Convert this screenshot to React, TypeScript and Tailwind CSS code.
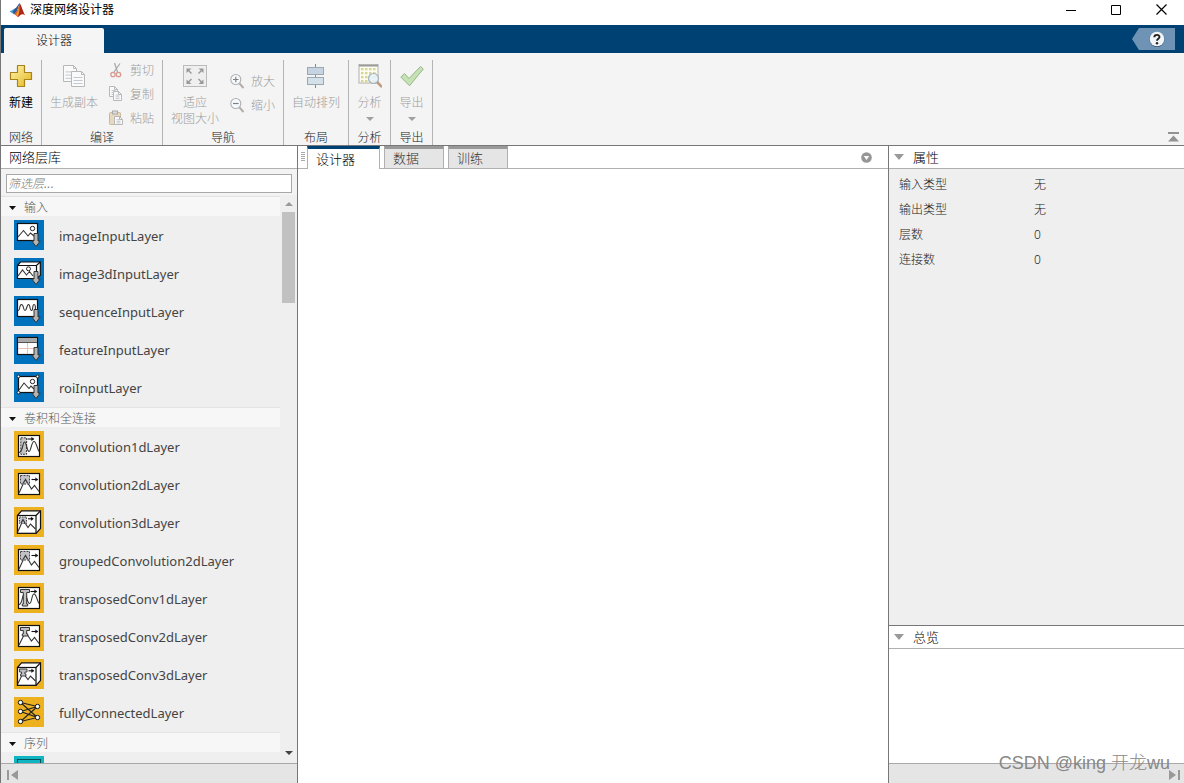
import { useState, type ReactNode } from "react";

type IconKind =
  | "image" | "image3d" | "sequence" | "feature" | "roi"
  | "conv1d" | "conv2d" | "conv3d" | "tconv1d" | "tconv2d" | "tconv3d" | "full";

const DownArrow = () => (
  <path d="M20 13.5h4v7.500h2.200l-4.200 5.500-4.200-5.500h2.200z" fill="#b4b4b4" stroke="#333" strokeWidth="1" />
);

const PLine = ({ d }: { d: string }) => <path d={d} fill="none" stroke="#333" strokeWidth="1.1" />;

const SmallArrow = ({ x, y, l = 6 }: { x: number; y: number; l?: number }) => (
  <g stroke="#111" strokeWidth="1.1" fill="#111">
    <path d={`M${x} ${y}h${l}`} fill="none" />
    <path d={`M${x + l - 2} ${y - 1.8}l2.6 1.8l-2.6 1.8z`} strokeWidth="0.3" />
  </g>
);

const Frame = () => <rect x="4.5" y="4.5" width="21" height="21" fill="#fff" stroke="#111" strokeWidth="1.2" />;

const Cube = () => (
  <g fill="#fff" stroke="#111" strokeWidth="1.2">
    <path d="M3.5 8.5L7.5 3.8H26.5V21.5L22 26.3H3.5Z" />
    <path d="M22 8.5L26.5 3.8" />
    <rect x="3.5" y="8.5" width="18.5" height="17.8" />
  </g>
);

const tee = (x: number, y: number, w: number, h: number) => {
  const arm = w / 2 - 1.7;
  return `M${x} ${y}h${w}v3h${-arm}v${h - 5}h1v2h-5.4v-2h1v${5 - h}h${-arm}z`;
};

const shapes: Record<IconKind, ReactNode> = {
  image: (
    <>
      <rect x="3.5" y="3.5" width="20" height="17" fill="#fff" stroke="#111" strokeWidth="1.2" />
      <PLine d="M4 17L9.5 10.5L14 16L16.5 13L20 16" />
      <circle cx="18.5" cy="8.5" r="2.2" fill="#fff" stroke="#222" />
      <DownArrow />
    </>
  ),
  image3d: (
    <>
      <path d="M3.5 7.500L6.500 4H26.300V17.500L22.500 20.500H3.500Z" fill="#fff" stroke="#111" strokeWidth="1.2" />
      <path d="M3.5 7.500H22.500L26.300 4M22.500 7.500V20.500" fill="none" stroke="#111" strokeWidth="1.2" />
      <PLine d="M4 18L8.5 12L12.5 17L15.5 13.5L19 18" />
      <circle cx="14.5" cy="10.8" r="2" fill="#fff" stroke="#222" />
      <DownArrow />
    </>
  ),
  sequence: (
    <>
      <rect x="3.5" y="3.5" width="20" height="17" fill="#fff" stroke="#111" strokeWidth="1.2" />
      <PLine d="M4 14.500C6.500 14.500 5 8.500 7.500 8.500S9 14.500 11 14.500S12.500 8.500 14.500 8.500S15.500 14.500 17.500 14.500S18 8.500 20 8.500S21 10 21.500 13" />
      <DownArrow />
    </>
  ),
  feature: (
    <>
      <rect x="3.5" y="3.5" width="20" height="17" fill="#fff" stroke="#111" strokeWidth="1.2" />
      <rect x="4" y="4" width="19" height="4.5" fill="#aaa" />
      <path d="M4 8.5H23" stroke="#555" />
      <path d="M4 14.5H23M13.5 9V20" stroke="#e6c4b4" />
      <DownArrow />
    </>
  ),
  roi: (
    <>
      <rect x="4.5" y="4.5" width="19" height="16" fill="#fff" stroke="#111" strokeWidth="1.2" />
      <PLine d="M5 18L10 11L15 16.5L17 14L20 17" />
      <circle cx="18.5" cy="9.5" r="2.2" fill="#fff" stroke="#222" />
      <g fill="#fff" stroke="#111" strokeWidth="0.9">
        <circle cx="4.5" cy="4.5" r="1.4" />
        <circle cx="23.5" cy="4.5" r="1.4" />
        <circle cx="4.5" cy="20.5" r="1.4" />
      </g>
      <DownArrow />
    </>
  ),
  conv1d: (
    <>
      <Frame />
      <rect x="6.8" y="6.8" width="5.8" height="16.5" fill="#c4c4c4" stroke="#333" strokeDasharray="2 1" />
      <PLine d="M5 21.500C9 21.500 8.500 11 10.500 11S13 20.500 15 20.500S17.500 10.500 20 10.500S23 18 25 20.500" />
      <SmallArrow x={13.5} y={8} />
    </>
  ),
  conv2d: (
    <>
      <Frame />
      <PLine d="M5 24L11.500 10L17.500 20L20.500 16.500L25 22.500" />
      <rect x="6.500" y="6.500" width="9" height="8.500" fill="#b8b8c0dd" stroke="#444" strokeDasharray="2 1" />
      <PLine d="M9 14.500L11.500 10.500L13.500 14" />
      <SmallArrow x={17.5} y={10.5} />
    </>
  ),
  conv3d: (
    <>
      <Cube />
      <PLine d="M4 24.500L9 13L14 20.500L16.500 17L21.500 22" />
      <rect x="5.500" y="10" width="7" height="6.500" fill="#b8b8c0dd" stroke="#444" strokeDasharray="1.500 1" />
      <PLine d="M7 16L9 12.500L11 16" />
      <SmallArrow x={14} y={11.8} l={5} />
    </>
  ),
  tconv1d: (
    <>
      <Frame />
      <PLine d="M5 21.500C8.500 21.500 8 11 10.500 11S13 20.500 15.500 20.500S17.500 11 20 11S23 18 25 20.500" />
      <path d={tee(6.5, 6.5, 9, 16.5)} fill="#c0c0c0" stroke="#333" strokeWidth="1" />
      <SmallArrow x={16.5} y={8.5} l={6} />
    </>
  ),
  tconv2d: (
    <>
      <Frame />
      <PLine d="M5 24L11.500 11L17.500 20L20.500 16.500L25 22.500" />
      <path d={tee(6.5, 6.5, 9, 8.5)} fill="#c0c0c0" stroke="#333" strokeWidth="1" />
      <SmallArrow x={17.5} y={10.5} />
    </>
  ),
  tconv3d: (
    <>
      <Cube />
      <PLine d="M4 24.500L9 14L14 20.500L16.500 17L21.500 22" />
      <path d={tee(5.5, 10, 7.5, 7)} fill="#c0c0c0" stroke="#333" strokeWidth="0.9" />
      <SmallArrow x={14.500} y={11.8} l={5} />
    </>
  ),
  full: (
    <>
      <path
        d="M6.500 5.500L23.500 9.500L6.500 14.500L23.500 20.500L6.500 24.500L23.500 9.500M6.500 5.500L23.500 20.500"
        fill="none" stroke="#222" strokeWidth="1.1"
      />
      <g fill="#fff" stroke="#111" strokeWidth="1">
        <circle cx="6.500" cy="5.500" r="2.200" />
        <circle cx="6.500" cy="14.500" r="2.200" />
        <circle cx="6.500" cy="24.500" r="2.200" />
        <circle cx="23.500" cy="9.500" r="2.200" />
        <circle cx="23.500" cy="20.500" r="2.200" />
      </g>
    </>
  ),
};

const inputLayers: [IconKind, string][] = [
  ["image", "imageInputLayer"],
  ["image3d", "image3dInputLayer"],
  ["sequence", "sequenceInputLayer"],
  ["feature", "featureInputLayer"],
  ["roi", "roiInputLayer"],
];

const convLayers: [IconKind, string][] = [
  ["conv1d", "convolution1dLayer"],
  ["conv2d", "convolution2dLayer"],
  ["conv3d", "convolution3dLayer"],
  ["conv2d", "groupedConvolution2dLayer"],
  ["tconv1d", "transposedConv1dLayer"],
  ["tconv2d", "transposedConv2dLayer"],
  ["tconv3d", "transposedConv3dLayer"],
  ["full", "fullyConnectedLayer"],
];

const properties = [
  ["输入类型", "无"],
  ["输出类型", "无"],
  ["层数", "0"],
  ["连接数", "0"],
];

function LayerItem({ icon, name, bg }: { icon: IconKind; name: string; bg: string }) {
  return (
    <li>
      <button className="flex h-[38px] w-full items-center gap-[15px] pl-[13px] text-left font-['Noto_Sans','Noto_Sans_CJK_SC',sans-serif] text-[13px] text-[#444]">
        <svg viewBox="0 0 30 30" className={`size-[30px] shrink-0 ${bg}`} aria-hidden="true">
          {shapes[icon]}
        </svg>
        <span className="pt-[3px]">{name}</span>
      </button>
    </li>
  );
}

function Category({ title }: { title: string }) {
  return (
    <h3 className="shrink-0 pt-px">
      <button className="flex h-5 w-full items-center gap-2 border-t border-[#e4e4e4] bg-[#f7f7f7] pt-0.5 pl-2 text-xs font-light text-[#5a5a5a]">
        <svg viewBox="0 0 7 4" className="h-1 w-[7px]" aria-hidden="true"><path d="M0 0h7L3.500 4z" fill="#111" /></svg>
        {title}
      </button>
    </h3>
  );
}

function Group({ label, children }: { label: string; children: ReactNode }) {
  return (
    <section className="flex">
      <div className="flex flex-col px-2 pt-[5px]">
        <div className="flex flex-1">{children}</div>
        <h2 className="pt-px text-center text-xs leading-[13px] font-light text-[#222]">{label}</h2>
      </div>
      <div className="mt-[7px] w-px bg-[#b4b4b4]" />
    </section>
  );
}

function BigButton({ icon, lines, enabled = false, menu = false }: { icon: ReactNode; lines: string[]; enabled?: boolean; menu?: boolean }) {
  return (
    <button
      disabled={!enabled}
      className={`flex flex-col items-center pt-1.5 text-xs leading-4 ${menu ? "w-[25px]" : ""} ${enabled ? "text-black" : "font-light text-[#9c9c9c]"}`}
    >
      <svg viewBox="0 0 24 24" className="mb-[7px] size-6 shrink-0" aria-hidden="true">{icon}</svg>
      {lines.map((l) => <span key={l} className="block whitespace-nowrap">{l}</span>)}
      {menu && <svg viewBox="0 0 8 4" className="mt-1.5 h-1 w-2 shrink-0" aria-hidden="true"><path d="M0 0h8L4 4z" fill="#a0a0a0" /></svg>}
    </button>
  );
}

function SmallButton({ icon, label }: { icon: ReactNode; label: string }) {
  return (
    <button disabled className="flex h-6 items-center gap-1.5 text-xs font-light text-[#9c9c9c]">
      <svg viewBox="0 0 16 16" className="size-4" aria-hidden="true">{icon}</svg>
      <span className="pt-px">{label}</span>
    </button>
  );
}

function PanelHeader({ title }: { title: string }) {
  return (
    <h2 className="h-[23px] shrink-0 border-b border-[#b0b0b0] bg-white">
      <button className="flex h-full items-center gap-[9px] pl-[5px] text-[13px] font-light text-black">
        <svg viewBox="0 0 10 6" className="h-1.5 w-2.5" aria-hidden="true"><path d="M0 0h10L5 6z" fill="#999" /></svg>
        <span className="pt-0.5">{title}</span>
      </button>
    </h2>
  );
}

const doc = (x: number, y: number, w: number, h: number) => (
  <g key={x}>
    <path d={`M${x} ${y}h${w - 3}l3 3v${h - 3}h-${w}z`} fill="#fafafa" stroke="#b8b8b8" />
    <path d={`M${x + w - 3} ${y}v3h3`} fill="none" stroke="#b8b8b8" />
    <path d={`M${x + 2} ${y + h * 0.4}h${w - 4}M${x + 2} ${y + h * 0.6}h${w - 4}M${x + 2} ${y + h * 0.8}h${w - 4}`} stroke="#bcc3cc" strokeWidth="0.9" />
  </g>
);

const magnifier = (plus: boolean) => (
  <>
    <path d="M10.500 10.500L14.500 15" stroke="#b3aeaa" strokeWidth="2" />
    <circle cx="6.800" cy="6.500" r="5" fill="#f7fafc" stroke="#b0b0b0" strokeWidth="1.100" />
    <path d={plus ? "M4 6.500h5.600M6.800 3.700v5.600" : "M4 6.500h5.600"} stroke="#808080" strokeWidth="1.200" />
  </>
);

export default function App() {
  const [tab, setTab] = useState(0);
  return (
    <div className="relative flex h-screen flex-col overflow-hidden border-l border-[#777] bg-[#f4f4f4] font-['Liberation_Sans','Noto_Sans_CJK_SC',sans-serif]">
      <header className="flex h-[25px] shrink-0 items-start bg-white">
        <div className="flex h-[19px] items-center gap-1 pl-2">
          <svg viewBox="0 0 17 16" className="h-4 w-[17px]" aria-hidden="true">
            <path d="M0.500 9.500L5.500 6.800L8.500 9L5 12.200Z" fill="#4a9ad0" />
            <path d="M5.500 6.800C8 6 8.500 3 10.500 1C9.500 5 8.500 9 5 12.200L3.800 10Z" fill="#2b5a96" />
            <path d="M10.500 1C9.500 6 8 10 5 12.200C7 12 8 15 9 15C11 14.500 11.500 11.500 13 11.500Z" fill="#d2471e" />
            <path d="M10.500 1C12.500 3 14 10 16.300 13.500C14 11.200 11.500 12 9 15C10.500 10 10.800 6 10.500 1Z" fill="#a82a18" />
            <path d="M10.300 2.500C10.800 8 10 12 8.800 14.500L6.800 12.300C9 9.500 9.800 6 10.300 2.500Z" fill="#f0932b" />
          </svg>
          <h1 className="text-xs text-black">深度网络设计器</h1>
        </div>
        <div className="ml-auto flex h-[19px] items-center gap-[35px] pr-[17px]">
          <button aria-label="最小化"><svg viewBox="0 0 10 10" className="size-2.5"><path d="M0 5.500h10" stroke="#000" /></svg></button>
          <button aria-label="最大化"><svg viewBox="0 0 10 10" className="size-2.5"><path d="M.5.5h9v9h-9z" fill="none" stroke="#000" /></svg></button>
          <button aria-label="关闭"><svg viewBox="0 0 11 11" className="size-[11px]"><path d="M.5.5l10 10M10.500.5l-10 10" stroke="#000" strokeWidth="1.200" /></svg></button>
        </div>
      </header>

      <nav className="flex h-7 shrink-0 items-end bg-[#004173] pr-[9px] pl-[3px]">
        <button className="h-[25px] w-[100px] rounded-t-[2px] bg-[#f5f5f5] text-xs font-light text-black">设计器</button>
        <button aria-label="帮助" className="mb-[3px] ml-auto">
          <svg viewBox="0 0 44 22" className="h-[22px] w-11">
            <path d="M8 0H44V22H8L1 11Z" fill="#6e93b4" />
            <circle cx="26" cy="11.500" r="7.500" fill="#28496b" />
            <circle cx="26" cy="11" r="7.300" fill="#f2f5f8" />
            <path d="M23.300 9.300C23.300 6 28.600 6.200 28.500 9C28.400 10.800 26 10.800 26 12.800" fill="none" stroke="#222" strokeWidth="1.900" />
            <circle cx="26" cy="15.300" r="1.200" fill="#222" />
          </svg>
        </button>
      </nav>

      <div className="flex h-[93px] shrink-0 border-b border-[#777]">
        <Group label="网络">
          <BigButton enabled lines={["新建"]} icon={
            <>
              <defs><linearGradient id="gold" x1="0" y1="0" x2="1" y2="1"><stop offset="0" stopColor="#fff6b0" /><stop offset="1" stopColor="#e3b51c" /></linearGradient></defs>
              <path d="M8.500 1.500h7v7h7v7h-7v7h-7v-7h-7v-7h7z" fill="url(#gold)" stroke="#a8821c" strokeWidth="1.200" strokeLinejoin="round" />
            </>
          } />
        </Group>
        <Group label="编译">
          <BigButton lines={["生成副本"]} icon={<>{doc(1.5, 1.5, 13, 16)}{doc(9.5, 7.5, 13, 15)}</>} />
          <div className="ml-2.5 flex flex-col">
            <SmallButton label="剪切" icon={
              <g fill="none">
                <path d="M6.500 1L9.500 10M12 1.500L6 10" stroke="#aaa" strokeWidth="1.300" />
                <circle cx="5" cy="12.500" r="2.200" stroke="#d99a90" strokeWidth="1.300" />
                <circle cx="10.500" cy="12.500" r="2.200" stroke="#d99a90" strokeWidth="1.300" />
              </g>
            } />
            <SmallButton label="复制" icon={<>{doc(1.5, 0.5, 8, 10)}{doc(5.5, 5.5, 8, 9)}</>} />
            <SmallButton label="粘贴" icon={
              <>
                <rect x="1.500" y="2.500" width="11" height="12" rx="1" fill="#e6d9bf" stroke="#c8b89c" />
                <rect x="4.500" y="1" width="5" height="3" fill="#ddd" stroke="#aaa" />
                {doc(6.5, 6.5, 8, 8)}
              </>
            } />
          </div>
        </Group>
        <Group label="导航">
          <BigButton lines={["适应", "视图大小"]} icon={
            <>
              <rect x=".5" y="1.500" width="23" height="21" fill="#efefef" stroke="#bbb" />
              <path d="M8.500 9.500L4.500 5.500M15.500 9.500L19.500 5.500M8.500 15L4.500 19M15.500 15L19.500 19" stroke="#999" strokeWidth="1.400" />
              <path d="M3.500 4.500h5l-5 4.500zM20.500 4.500h-5l5 4.500zM3.500 20h5l-5-4.500zM20.500 20h-5l5-4.500z" fill="#999" />
            </>
          } />
          <div className="ml-2.5 flex flex-col pt-[11px]">
            <SmallButton label="放大" icon={magnifier(true)} />
            <SmallButton label="缩小" icon={magnifier(false)} />
          </div>
        </Group>
        <Group label="布局">
          <BigButton lines={["自动排列"]} icon={
            <>
              <path d="M11.500 0v24" stroke="#888" />
              <rect x="3.500" y="3.500" width="16" height="7" fill="#c5d4e0" stroke="#99a8b5" />
              <rect x="3.500" y="13.500" width="16" height="7" fill="#d5e1e9" stroke="#99a8b5" />
            </>
          } />
        </Group>
        <Group label="分析">
          <BigButton menu lines={["分析"]} icon={
            <>
              <rect x="1" y="0" width="19" height="19" fill="#fdfcf0" stroke="#b0b0b0" />
              <path d="M1 1.500h19" stroke="#999" strokeWidth="2" />
              <g fill="#d8d696">
                {[4, 8, 12, 16].map((y) => [3, 7, 11, 15].map((x) => <rect key={`${x}-${y}`} x={x} y={y} width="2.500" height="2.300" />))}
              </g>
              <path d="M19 18L24 23" stroke="#c09a7b" strokeWidth="2.500" />
              <circle cx="15.500" cy="14.500" r="5" fill="#e6f1f7e8" stroke="#a8b3bb" strokeWidth="1.200" />
            </>
          } />
        </Group>
        <Group label="导出">
          <BigButton menu lines={["导出"]} icon={<path d="M.8 13L4.500 9.500L9 14.500L20.500 2.500L23.300 5L9.500 21.800Z" fill="#c5e2b4" stroke="#99b58b" />} />
        </Group>
        <button aria-label="折叠工具条" className="mt-auto mr-[5px] mb-[3px] ml-auto">
          <svg viewBox="0 0 11 10" className="h-2.5 w-[11px]"><path d="M0 0h11v2H0zM5.500 3.500L11 9.500H0z" fill="#929292" /></svg>
        </button>
      </div>

      <main className="flex min-h-0 flex-1">
        <aside className="flex w-[297px] shrink-0 flex-col border-r border-[#777] bg-[#efefef]">
          <h2 className="flex h-[23px] shrink-0 items-center border-b border-[#b0b0b0] bg-white pt-0.5 pl-2 text-[13px] font-light text-black">网络层库</h2>
          <div className="shrink-0 bg-[#f3f3f3] px-[5px] pt-[5px] pb-[2px]">
            <input
              aria-label="筛选层"
              placeholder="筛选层..."
              className="block h-[19px] w-full border border-[#a8a8a8] bg-white px-px text-xs font-light italic outline-none placeholder:text-[#777]"
            />
          </div>
          <div className="flex min-h-0 flex-1">
            <div className="flex min-w-0 flex-1 flex-col overflow-hidden">
              <Category title="输入" />
              <ul className="shrink-0">
                {inputLayers.map(([icon, name]) => <LayerItem key={name} icon={icon} name={name} bg="bg-[#0072bd]" />)}
              </ul>
              <Category title="卷积和全连接" />
              <ul className="shrink-0">
                {convLayers.map(([icon, name]) => <LayerItem key={name} icon={icon} name={name} bg="bg-[#edb120]" />)}
              </ul>
              <Category title="序列" />
              <div className="shrink-0 pt-1 pl-[13px]">
                <svg viewBox="0 0 30 30" className="size-[30px] bg-[#10b5c4]" aria-hidden="true">
                  <rect x="3.500" y="3.500" width="23" height="23" fill="none" stroke="#07525a" />
                </svg>
              </div>
            </div>
            <div className="flex w-[17px] shrink-0 flex-col items-center pb-1.5 pl-px pr-px">
              <svg viewBox="0 0 8 4" className="mt-[7px] mb-1.5 h-1 w-2 shrink-0" aria-hidden="true"><path d="M0 4h8L4 0z" fill="#999" /></svg>
              <div className="h-[91px] w-[13px] bg-[#c1c1c1]" />
              <svg viewBox="0 0 8 4" className="mt-auto mb-0.5 h-1 w-2 shrink-0" aria-hidden="true"><path d="M0 0h8L4 4z" fill="#444" /></svg>
            </div>
          </div>
          <footer className="flex h-5 shrink-0 items-center border-t border-[#a8a8a8] bg-[#e5e5e5] pl-1.5">
            <button aria-label="第一个">
              <svg viewBox="0 0 11 10" className="mt-0.5 h-2.5 w-[11px]"><path d="M0 0h2v10H0zM11 0v10L4 5z" fill="#999" /></svg>
            </button>
          </footer>
        </aside>

        <section className="flex min-w-0 flex-1 flex-col bg-white">
          <div className="flex h-[23px] shrink-0">
            <div className="flex w-[9px] shrink-0 flex-col items-center gap-px border-b border-[#b0b0b0] pt-1.5">
              {[0, 1, 2, 3, 4].map((i) => <span key={i} className="h-px w-1 shrink-0 bg-[#aaa]" />)}
            </div>
            {["设计器", "数据", "训练"].map((t, i) => (
              <div key={t} className="flex">
                <button
                  onClick={() => setTab(i)}
                  className={`border-x border-t-[3px] border-x-[#b0b0b0] pt-px pl-2 text-left text-[13px] leading-[18px] font-light ${i === 0 ? "w-[73px]" : "w-[60px]"} ${
                    tab === i ? "border-t-[#004173] bg-white text-black" : "border-b border-t-[#999] border-b-[#b0b0b0] bg-[#e5e5e5] text-[#333]"
                  }`}
                >
                  {t}
                </button>
                <div className="w-1 border-b border-[#b0b0b0]" />
              </div>
            ))}
            <div className="flex flex-1 items-center justify-end border-b border-[#b0b0b0] pr-4">
              <button aria-label="标签选项">
                <svg viewBox="0 0 11 11" className="size-[11px]"><circle cx="5.500" cy="5.500" r="5.300" fill="#969696" /><path d="M2.800 4h5.400L5.500 8z" fill="#fff" /></svg>
              </button>
            </div>
          </div>
          <div className="flex-1" />
        </section>

        <aside className="flex w-[296px] shrink-0 flex-col border-l border-[#777] bg-[#efefef]">
          <PanelHeader title="属性" />
          <div className="flex-1 pt-[3px] pl-2.5">
            <table className="w-full table-fixed text-left text-xs font-light text-[#222]">
              <tbody>
                {properties.map(([k, v]) => (
                  <tr key={k} className="h-[25px]">
                    <th scope="row" className="w-[135px] p-0 font-light">{k}</th>
                    <td className="p-0 font-['Noto_Sans','Noto_Sans_CJK_SC',sans-serif]">{v}</td>
                  </tr>
                ))}
              </tbody>
            </table>
          </div>
          <div className="flex h-[158px] shrink-0 flex-col border-t border-[#777] bg-white">
            <PanelHeader title="总览" />
            <div className="flex-1" />
            <footer className="flex h-5 shrink-0 items-center justify-end border-t border-[#a8a8a8] bg-[#e5e5e5] pr-1">
              <button aria-label="最后一个">
                <svg viewBox="0 0 11 10" className="mt-0.5 h-2.5 w-[11px]"><path d="M9 0h2v10H9zM0 0v10L7 5z" fill="#999" /></svg>
              </button>
            </footer>
          </div>
        </aside>
      </main>

      <p className="pointer-events-none absolute right-3.5 bottom-1.5 text-lg leading-7 font-light text-[#888]">CSDN @king 开龙wu</p>
    </div>
  );
}
